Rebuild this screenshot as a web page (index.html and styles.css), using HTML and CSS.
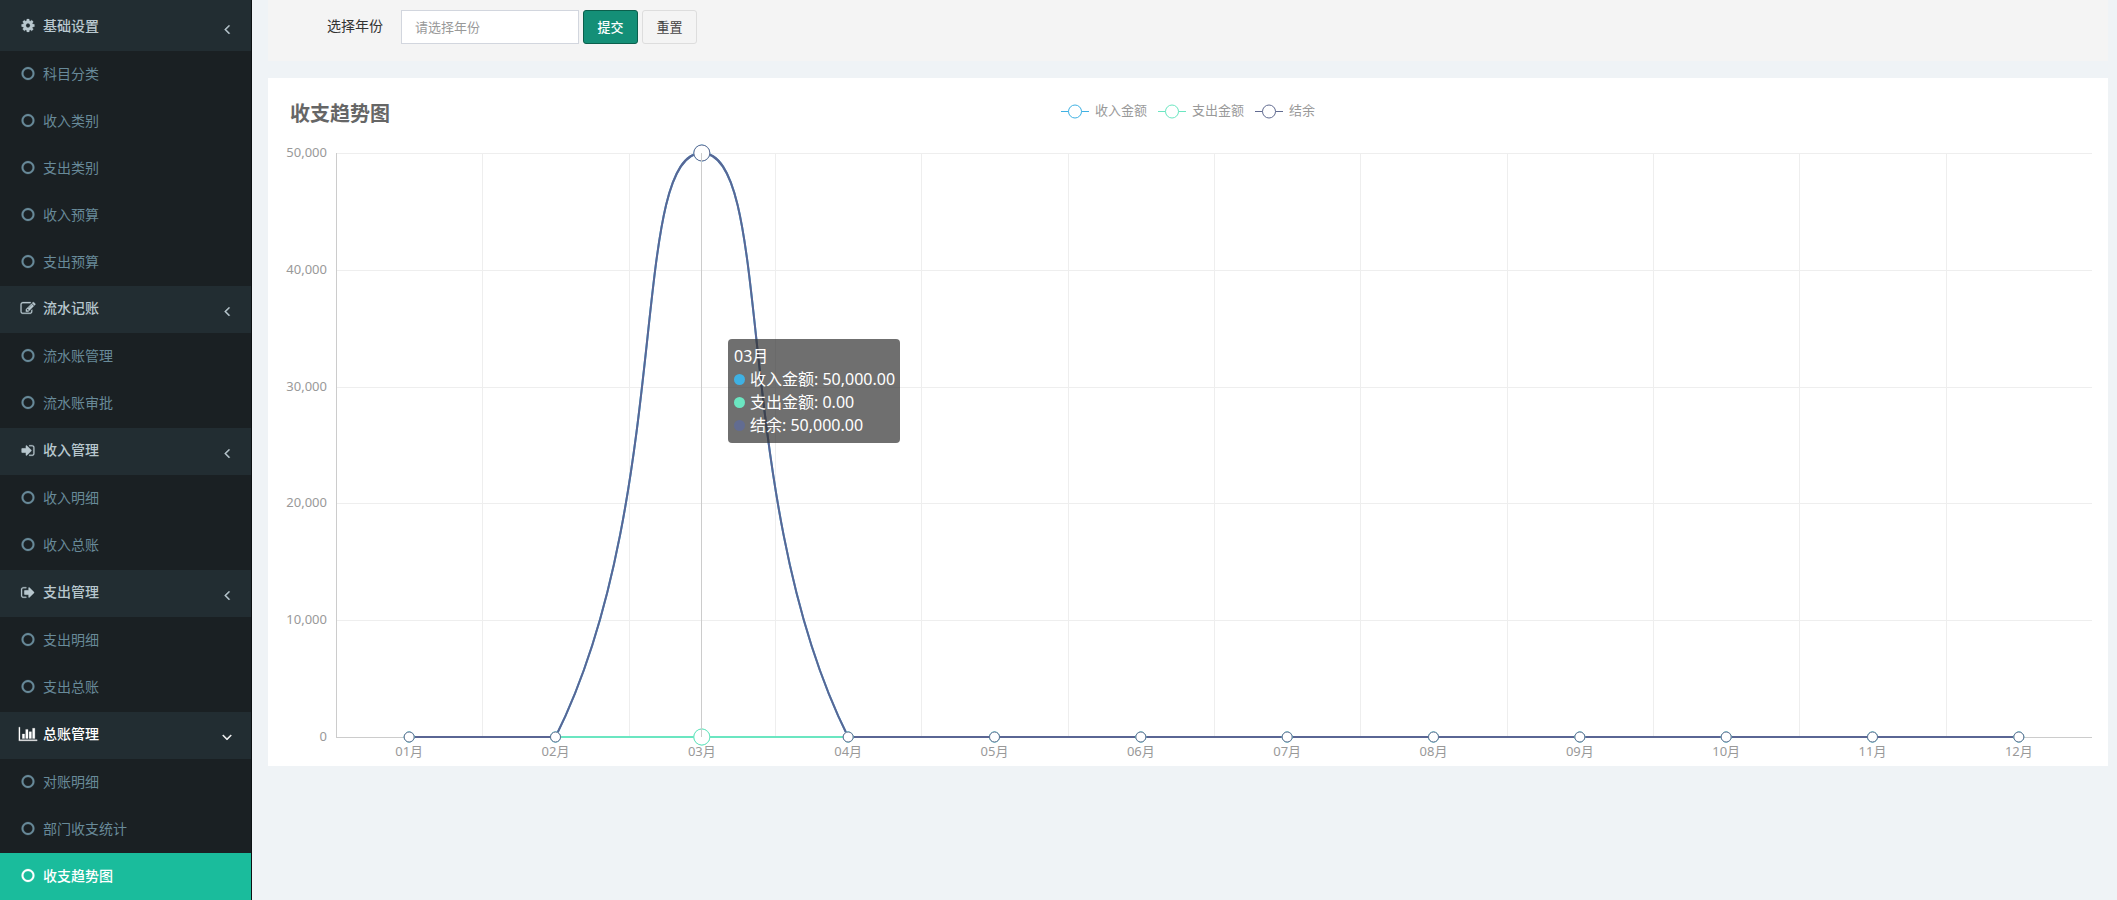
FILE: index.html
```html
<!DOCTYPE html>
<html lang="zh-CN">
<head>
<meta charset="utf-8">
<title>收支趋势图</title>
<link rel="stylesheet" href="styles.css">
</head>
<body>
<svg class="sprite" aria-hidden="true">
  <symbol id="cog" viewBox="0 0 1792 1792"><path d="M1152 896q0-106-75-181t-181-75-181 75-75 181 75 181 181 75 181-75 75-181zm512-109v222q0 12-8 23t-20 13l-185 28q-19 54-39 91 35 50 107 138 10 12 10 25t-9 23q-27 37-99 108t-94 71q-12 0-26-9l-138-108q-44 23-91 38-16 136-29 186-7 28-36 28h-222q-14 0-24.5-8.5t-11.5-21.5l-28-184q-49-16-90-37l-141 107q-10 9-25 9-14 0-25-11-126-114-165-168-7-10-7-23 0-12 8-23 15-21 51-66.5t54-70.5q-27-50-41-99l-183-27q-13-2-21-12.5t-8-23.5v-222q0-12 8-23t19-13l186-28q14-46 39-92-40-57-107-138-10-12-10-24 0-10 9-23 26-36 98.5-107.5t94.5-71.5q13 0 26 10l138 107q44-23 91-38 16-136 29-186 7-28 36-28h222q14 0 24.5 8.5t11.5 21.5l28 184q49 16 90 37l142-107q9-9 24-9 13 0 25 10 129 119 165 170 7 8 7 22 0 12-8 23-15 21-51 66.5t-54 70.5q26 50 41 98l183 28q13 2 21 12.5t8 23.5z"/></symbol>
  <symbol id="circle" viewBox="0 0 1792 1792"><path d="M896 352q-148 0-273 73t-198 198-73 273 73 273 198 198 273 73 273-73 198-198 73-273-73-273-198-198-273-73zm768 544q0 209-103 385.5t-279.5 279.5-385.5 103-385.5-103-279.5-279.5-103-385.5 103-385.5 279.5-279.5 385.5-103 385.5 103 279.5 279.5 103 385.5z"/></symbol>
  <symbol id="edit" viewBox="0 0 1792 1792"><path d="M888 1184l116-116-152-152-116 116v56h96v96h56zm440-720q-16-16-33 1l-350 350q-17 17-1 33t33-1l350-350q17-17 1-33zm80 594v190q0 119-84.5 203.5t-203.5 84.5h-832q-119 0-203.5-84.5t-84.5-203.5v-832q0-119 84.5-203.5t203.5-84.5h832q63 0 117 25 15 7 18 23 3 17-9 29l-49 49q-14 14-32 8-23-6-45-6h-832q-66 0-113 47t-47 113v832q0 66 47 113t113 47h832q66 0 113-47t47-113v-126q0-13 9-22l64-64q15-15 35-7t20 29zm-96-738l288 288-672 672h-288v-288zm444 132l-92 92-288-288 92-92q28-28 68-28t68 28l152 152q28 28 28 68t-28 68z"/></symbol>
  <symbol id="sign-in" viewBox="0 0 1792 1792"><path d="M1312 896q0 26-19 45l-544 544q-19 19-45 19t-45-19-19-45v-288h-448q-26 0-45-19t-19-45v-384q0-26 19-45t45-19h448v-288q0-26 19-45t45-19 45 19l544 544q19 19 19 45zm352-352v704q0 119-84.5 203.5t-203.5 84.5h-320q-13 0-22.5-9.5t-9.5-22.5q0-4-1-20t-.5-26.5 3-23.5 10-19.5 20.5-6.5h320q66 0 113-47t47-113v-704q0-66-47-113t-113-47h-312l-11.5-1-11.5-3-8-5.5-7-9-2-13.5q0-4-1-20t-.5-26.5 3-23.5 10-19.5 20.5-6.5h320q119 0 203.5 84.5t84.5 203.5z"/></symbol>
  <symbol id="sign-out" viewBox="0 0 1792 1792"><path d="M704 1440q0 4 1 20t.5 26.5-3 23.5-10 19.5-20.5 6.5h-320q-119 0-203.5-84.5t-84.5-203.5v-704q0-119 84.5-203.5t203.5-84.5h320q13 0 22.5 9.5t9.5 22.5q0 4 1 20t.5 26.5-3 23.5-10 19.5-20.5 6.5h-320q-66 0-113 47t-47 113v704q0 66 47 113t113 47h312l11.5 1 11.5 3 8 5.5 7 9 2 13.5zm928-544q0 26-19 45l-544 544q-19 19-45 19t-45-19-19-45v-288h-448q-26 0-45-19t-19-45v-384q0-26 19-45t45-19h448v-288q0-26 19-45t45-19 45 19l544 544q19 19 19 45z"/></symbol>
  <symbol id="bars" viewBox="0 0 2048 1792"><path d="M640 896v512h-256v-512h256zm384-512v1024h-256v-1024h256zm1024 1152v128h-2048v-1536h128v1408h1920zm-640-896v768h-256v-768h256zm384-384v1152h-256v-1152h256z"/></symbol>
  <symbol id="angle-left" viewBox="0 0 1792 1792"><path d="M1203 544q0 13-10 23l-393 393 393 393q10 10 10 23t-10 23l-50 50q-10 10-23 10t-23-10l-466-466q-10-10-10-23t10-23l466-466q10-10 23-10t23 10l50 50q10 10 10 23z"/></symbol>
  <symbol id="angle-down" viewBox="0 0 1792 1792"><path d="M1395 736q0 13-10 23l-466 466q-10 10-23 10t-23-10l-466-466q-10-10-10-23t10-23l50-50q10-10 23-10t23 10l393 393 393-393q10-10 23-10t23 10l50 50q10 10 10 23z"/></symbol>
</svg>
<div class="layout">
  <nav class="sidebar" aria-label="主菜单">
    <section class="group">
      <button class="group-head" type="button"><svg class="icon"><use href="#cog"/></svg><span>基础设置</span><svg class="arrow"><use href="#angle-left"/></svg></button>
      <ul class="submenu">
        <li><a class="item" href="#"><svg class="icon"><use href="#circle"/></svg><span>科目分类</span></a></li>
        <li><a class="item" href="#"><svg class="icon"><use href="#circle"/></svg><span>收入类别</span></a></li>
        <li><a class="item" href="#"><svg class="icon"><use href="#circle"/></svg><span>支出类别</span></a></li>
        <li><a class="item" href="#"><svg class="icon"><use href="#circle"/></svg><span>收入预算</span></a></li>
        <li><a class="item" href="#"><svg class="icon"><use href="#circle"/></svg><span>支出预算</span></a></li>
      </ul>
    </section>
    <section class="group">
      <button class="group-head" type="button"><svg class="icon"><use href="#edit"/></svg><span>流水记账</span><svg class="arrow"><use href="#angle-left"/></svg></button>
      <ul class="submenu">
        <li><a class="item" href="#"><svg class="icon"><use href="#circle"/></svg><span>流水账管理</span></a></li>
        <li><a class="item" href="#"><svg class="icon"><use href="#circle"/></svg><span>流水账审批</span></a></li>
      </ul>
    </section>
    <section class="group">
      <button class="group-head" type="button"><svg class="icon"><use href="#sign-in"/></svg><span>收入管理</span><svg class="arrow"><use href="#angle-left"/></svg></button>
      <ul class="submenu">
        <li><a class="item" href="#"><svg class="icon"><use href="#circle"/></svg><span>收入明细</span></a></li>
        <li><a class="item" href="#"><svg class="icon"><use href="#circle"/></svg><span>收入总账</span></a></li>
      </ul>
    </section>
    <section class="group">
      <button class="group-head" type="button"><svg class="icon"><use href="#sign-out"/></svg><span>支出管理</span><svg class="arrow"><use href="#angle-left"/></svg></button>
      <ul class="submenu">
        <li><a class="item" href="#"><svg class="icon"><use href="#circle"/></svg><span>支出明细</span></a></li>
        <li><a class="item" href="#"><svg class="icon"><use href="#circle"/></svg><span>支出总账</span></a></li>
      </ul>
    </section>
    <section class="group">
      <button class="group-head open" type="button"><svg class="icon icon-wide"><use href="#bars"/></svg><span>总账管理</span><svg class="arrow"><use href="#angle-down"/></svg></button>
      <ul class="submenu">
        <li><a class="item" href="#"><svg class="icon"><use href="#circle"/></svg><span>对账明细</span></a></li>
        <li><a class="item" href="#"><svg class="icon"><use href="#circle"/></svg><span>部门收支统计</span></a></li>
        <li><a class="item active" href="#" aria-current="page"><svg class="icon"><use href="#circle"/></svg><span>收支趋势图</span></a></li>
      </ul>
    </section>
  </nav>

  <main class="content">
    <form class="filter">
      <label class="filter-label" for="year">选择年份</label>
      <input class="field" id="year" type="text" placeholder="请选择年份">
      <button class="btn btn-primary" type="button">提交</button>
      <button class="btn" type="reset">重置</button>
    </form>

    <section class="card">
      <header class="card-head">
        <h1 class="title">收支趋势图</h1>
        <ul class="legend">
          <li class="legend-item income"><svg class="mark" viewBox="0 0 28 16"><path d="M0 8.5h28"/><circle cx="14" cy="8.5" r="6.5"/></svg>收入金额</li>
          <li class="legend-item expense"><svg class="mark" viewBox="0 0 28 16"><path d="M0 8.5h28"/><circle cx="14" cy="8.5" r="6.5"/></svg>支出金额</li>
          <li class="legend-item balance"><svg class="mark" viewBox="0 0 28 16"><path d="M0 8.5h28"/><circle cx="14" cy="8.5" r="6.5"/></svg>结余</li>
        </ul>
      </header>
      <div class="plot">
        <svg class="chart" id="chart" role="img" aria-label="收支趋势图"></svg>
        <div class="tooltip" id="tooltip">
          <div>03月</div>
          <div class="tip-row"><i class="dot dot-income"></i>收入金额: 50,000.00</div>
          <div class="tip-row"><i class="dot dot-expense"></i>支出金额: 0.00</div>
          <div class="tip-row"><i class="dot dot-balance"></i>结余: 50,000.00</div>
        </div>
      </div>
    </section>
  </main>
</div>
<script src="chart.js"></script>
</body>
</html>
```
FILE: styles.css
```css
* { box-sizing: border-box; }

body {
  margin: 0;
  background: #eff3f6;
  color: #333;
  font-family: "Noto Sans", "Noto Sans CJK SC", sans-serif;
  font-size: 14px;
}

ul { margin: 0; padding: 0; list-style: none; }
button, input { font-family: inherit; }

.sprite { display: none; }
.layout { display: flex; min-height: 100vh; }

/* Sidebar */
.sidebar {
  flex: none;
  width: 252px;
  background: #1a2023;
  border-right: 1px solid #0d1113;
}
.group { padding-bottom: 1px; }
.group:first-child, .group:last-child { padding-bottom: 0; }
.group-head, .item {
  display: flex;
  align-items: center;
  gap: 5px;
  width: 100%;
  height: 47px;
  padding: 0 16px 2px 18px;
  font-size: 14px;
  line-height: 20px;
  text-decoration: none;
}
.group-head {
  padding-bottom: 3px;
  border: 0;
  background: #222d32;
  color: #b8c7ce;
  font-weight: 500;
  text-align: left;
  cursor: pointer;
}
.group:first-child .group-head { height: 51px; padding-bottom: 0; }
.group-head.open { color: #fff; }
.item { color: #688a99; }
.item.active { background: #1abc9c; color: #fff; font-weight: 500; }
.icon { flex: none; width: 20px; height: 15px; fill: currentColor; stroke: currentColor; stroke-width: 30; }
.icon-wide { height: 16px; }
.arrow {
  width: 16px;
  height: 16px;
  margin-top: 6px;
  margin-left: auto;
  fill: currentColor;
  stroke: currentColor;
  stroke-width: 40;
}

/* Main column */
.content { flex: 1; min-width: 0; padding: 0 9px 0 16px; }

.filter {
  display: flex;
  align-items: flex-start;
  gap: 4px;
  height: 61px;
  margin-bottom: 17px;
  padding: 10px 16px 0 59px;
  background: #f4f4f4;
}
.filter-label { margin-right: 14px; line-height: 32px; }
.field {
  width: 178px;
  height: 34px;
  padding: 0 13px;
  border: 1px solid #d2d6de;
  background: #fff;
  font-size: 13px;
}
.field::placeholder { color: #999; }
.btn {
  width: 55px;
  height: 34px;
  padding: 0 0 2px;
  border: 1px solid #ddd;
  border-radius: 3px;
  background: #f4f4f4;
  color: #444;
  font-size: 13px;
}
.btn-primary { border-color: #0b5f4c; background: #148f77; color: #fff; font-weight: 500; }

.card { background: #fff; }
.card-head {
  display: grid;
  grid-template-columns: 1fr auto 1fr;
  align-items: start;
  padding: 19px 22px 8px;
}
.title { margin: 0; color: #666; font-size: 20px; line-height: 33px; font-weight: 700; }
.legend { display: flex; gap: 11px; color: #999; font-size: 13px; line-height: 26px; }
.legend-item { display: flex; align-items: center; gap: 6px; }
.mark { width: 28px; height: 16px; margin-top: 2px; fill: #fff; stroke: currentColor; }
.income .mark { color: #3fb1e3; }
.expense .mark { color: #6be6c1; }
.balance .mark { color: #626c91; }

.plot { position: relative; }
.chart { display: block; width: 100%; height: 628px; }
.chart text { fill: #999; font-size: 13px; }
.label-x { text-anchor: middle; }
.label-y { text-anchor: end; }
.split { stroke: #eee; }
.axis { stroke: #ccc; }
.pointer { stroke: #ccc; }
.line { fill: none; stroke-width: 2; }
.line-income, .point-income { stroke: #3fb1e3; }
.line-expense, .point-expense { stroke: #6be6c1; }
.line-balance, .point-balance { stroke: #626c91; }
.line-balance { stroke: #5a6694; }
.point { fill: #fff; }

.tooltip {
  position: absolute;
  top: 201px;
  padding: 6px 5px 6px 6px;
  border-radius: 4px;
  background: rgba(50, 50, 50, 0.7);
  color: #fff;
  font-size: 16px;
  line-height: 23px;
  white-space: nowrap;
}
.tip-row { display: flex; align-items: center; gap: 5px; }
.dot { width: 11px; height: 11px; border-radius: 50%; }
.dot-income { background: #3fb1e3; }
.dot-expense { background: #6be6c1; }
.dot-balance { background: #626c91; }
```
FILE: chart.js
```javascript
(function () {
  var svg = document.getElementById('chart');
  var tooltip = document.getElementById('tooltip');
  var grid = { left: 68, right: 16, top: 15, bottom: 29 };
  var max = 50000;
  var hovered = 2;
  var smooth = 0.5;
  var series = [
    { name: 'income', data: [0, 0, 50000, 0, 0, 0, 0, 0, 0, 0, 0, 0] },
    { name: 'expense', data: [0, 0, 0, 0, 0, 0, 0, 0, 0, 0, 0, 0] },
    { name: 'balance', data: [0, 0, 50000, 0, 0, 0, 0, 0, 0, 0, 0, 0] }
  ];

  function add(tag, attrs, text) {
    var el = document.createElementNS('http://www.w3.org/2000/svg', tag);
    Object.keys(attrs).forEach(function (key) { el.setAttribute(key, attrs[key]); });
    if (text) el.textContent = text;
    svg.appendChild(el);
  }

  function segment(x1, y1, x2, y2, name) {
    add('line', { x1: x1, y1: y1, x2: x2, y2: y2, 'class': name });
  }

  // Each point's handles follow the chord between its neighbours.
  function curve(pts, floor) {
    var handles = pts.map(function (p, i) {
      var a = pts[i - 1], b = pts[i + 1];
      if (!a || !b) return { before: p, after: p };
      var prev = Math.hypot(p[0] - a[0], p[1] - a[1]);
      var next = Math.hypot(b[0] - p[0], b[1] - p[1]);
      var ratio = next / (prev + next);
      var vx = (b[0] - a[0]) * smooth, vy = (b[1] - a[1]) * smooth;
      return {
        before: [p[0] - vx * (1 - ratio), Math.min(floor, p[1] - vy * (1 - ratio))],
        after: [p[0] + vx * ratio, Math.min(floor, p[1] + vy * ratio)]
      };
    });
    return pts.reduce(function (d, p, i) {
      if (!i) return 'M' + p;
      return d + 'C' + handles[i - 1].after + ' ' + handles[i].before + ' ' + p;
    }, '');
  }

  function draw() {
    var width = svg.clientWidth, height = svg.clientHeight;
    var right = width - grid.right, bottom = height - grid.bottom;
    var step = (right - grid.left) / 12;
    svg.textContent = '';

    for (var i = 0; i <= 5; i++) {
      var y = Math.round(bottom - (bottom - grid.top) * i / 5) + 0.5;
      if (i) segment(grid.left, y, right, y, 'split');
      add('text', { x: grid.left - 9, y: y + 3, 'class': 'label-y' }, (i * 10000).toLocaleString('en-US'));
    }
    for (var m = 0; m < 12; m++) {
      if (m < 11) {
        var x = Math.round(grid.left + step * (m + 1)) + 0.5;
        segment(x, grid.top, x, bottom, 'split');
      }
      var month = (m < 9 ? '0' : '') + (m + 1) + '月';
      add('text', { x: grid.left + step * (m + 0.5), y: bottom + 19, 'class': 'label-x' }, month);
    }
    segment(grid.left + 0.5, grid.top, grid.left + 0.5, bottom, 'axis');
    segment(grid.left, bottom + 0.5, right, bottom + 0.5, 'axis');

    var plotted = series.map(function (s) {
      return s.data.map(function (v, n) {
        return [grid.left + step * (n + 0.5), bottom - (bottom - grid.top) * v / max];
      });
    });
    plotted.forEach(function (pts, n) {
      add('path', { d: curve(pts, bottom), 'class': 'line line-' + series[n].name });
    });
    plotted.forEach(function (pts, n) {
      pts.forEach(function (p, k) {
        add('circle', { cx: p[0], cy: p[1], r: k === hovered ? 8 : 5, 'class': 'point point-' + series[n].name });
      });
    });
    // The flat series is raised at the hovered month.
    var px = Math.round(grid.left + step * (hovered + 0.5)) - 0.5;
    add('circle', { cx: plotted[1][hovered][0], cy: bottom, r: 8, 'class': 'point point-expense' });
    segment(px, grid.top, px, bottom, 'pointer');
    tooltip.style.left = Math.round(px + 26) + 'px';
  }

  draw();
  window.addEventListener('resize', draw);
})();
```
